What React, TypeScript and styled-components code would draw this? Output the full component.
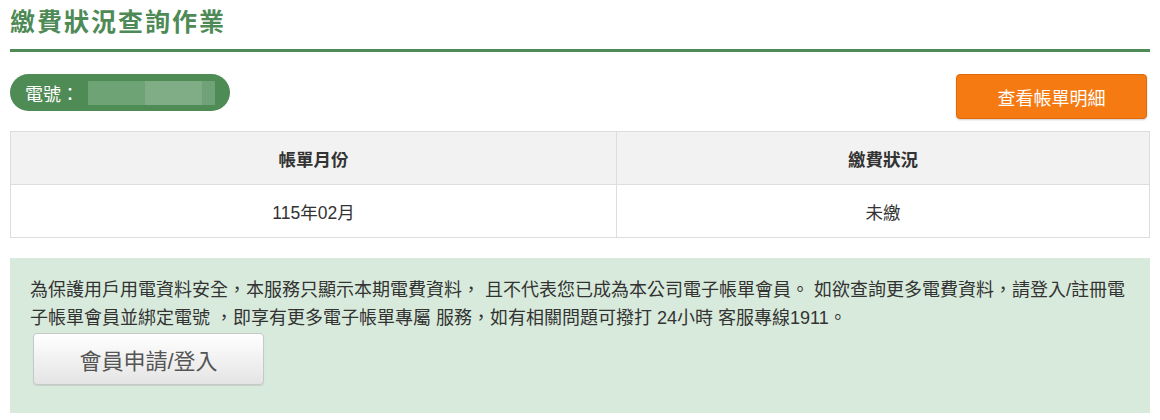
import React from 'react';
import styled, { createGlobalStyle } from 'styled-components';

const GlobalStyle = createGlobalStyle`
	body {
		margin: 0;
		background: #ffffff;
		font-family: 'Liberation Sans', 'Noto Sans CJK TC', sans-serif;
		color: #333333;
	}
`;

const Page = styled.div`
	padding: 0 10px;
`;

const Title = styled.h2`
	margin: 0;
	font-size: 25px;
	line-height: 44px;
	letter-spacing: 2px;
	font-weight: 700;
	color: #4e8a56;
	padding-bottom: 5px;
	border-bottom: 3px solid #4f8b55;
`;

const TopRow = styled.div`
	display: flex;
	justify-content: space-between;
	align-items: flex-start;
	margin-top: 22px;
`;

const PhonePill = styled.div`
	display: flex;
	align-items: center;
	width: 220px;
	height: 37px;
	box-sizing: border-box;
	padding-left: 15px;
	border-radius: 19px;
	background: #4f8b55;
	color: #ffffff;
	font-size: 18px;
`;

const Masked = styled.div`
	display: flex;
	margin-left: 9px;
	height: 24px;
`;

const MaskBlock = styled.span<{ $w: number; $c: string }>`
	width: ${(p) => p.$w}px;
	background: ${(p) => p.$c};
`;

const OrangeButton = styled.button`
	width: 191px;
	height: 45px;
	margin-right: 3px;
	border: 1px solid #e06a0a;
	border-radius: 4px;
	background: #f57a12;
	color: #ffffff;
	font-family: inherit;
	font-size: 18px;
	box-shadow: 0 1px 2px rgba(0, 0, 0, 0.2);
	cursor: pointer;
`;

const Table = styled.table`
	width: 100%;
	margin-top: 12px;
	border-collapse: collapse;
	table-layout: fixed;
	font-size: 17.5px;
`;

const Th = styled.th<{ $w?: string }>`
	height: 53px;
	box-sizing: border-box;
	padding: 0;
	background: #f2f2f2;
	border: 1px solid #dddddd;
	font-weight: 700;
	color: #333333;
	width: ${(p) => p.$w || 'auto'};
`;

const Td = styled.td`
	height: 53px;
	box-sizing: border-box;
	padding: 0;
	border: 1px solid #dddddd;
	text-align: center;
	color: #333333;
`;

const Notice = styled.div`
	margin-top: 20px;
	background: #d8eadb;
	padding: 18px 20px 28px 20px;
`;

const NoticeText = styled.p`
	margin: 0;
	font-size: 18px;
	line-height: 28px;
	color: #333333;
`;

const MemberButton = styled.button`
	display: block;
	margin: 1px 0 0 3px;
	width: 231px;
	height: 52px;
	border: 1px solid #c8c8c8;
	border-radius: 4px;
	background: linear-gradient(#ffffff, #e4e4e4);
	color: #555555;
	font-family: inherit;
	font-size: 22px;
	box-shadow: 0 1px 1px rgba(0, 0, 0, 0.1);
	cursor: pointer;
`;

export default function App() {
	return (
		<Page>
			<GlobalStyle />
			<Title>繳費狀況查詢作業</Title>
			<TopRow>
				<PhonePill>
					電號：
					<Masked>
						<MaskBlock $w={57} $c="#6ea375" />
						<MaskBlock $w={57} $c="#80ad86" />
						<MaskBlock $w={13} $c="#6fa377" />
					</Masked>
				</PhonePill>
				<OrangeButton>查看帳單明細</OrangeButton>
			</TopRow>
			<Table>
				<thead>
					<tr>
						<Th $w="53.2%">帳單月份</Th>
						<Th>繳費狀況</Th>
					</tr>
				</thead>
				<tbody>
					<tr>
						<Td>115年02月</Td>
						<Td>未繳</Td>
					</tr>
				</tbody>
			</Table>
			<Notice>
				<NoticeText>
					為保護用戶用電資料安全，本服務只顯示本期電費資料， 且不代表您已成為本公司電子帳單會員。
					如欲查詢更多電費資料，請登入/註冊電子帳單會員並綁定電號 ，即享有更多電子帳單專屬
					服務，如有相關問題可撥打 24小時 客服專線1911。
				</NoticeText>
				<MemberButton>會員申請/登入</MemberButton>
			</Notice>
		</Page>
	);
}
